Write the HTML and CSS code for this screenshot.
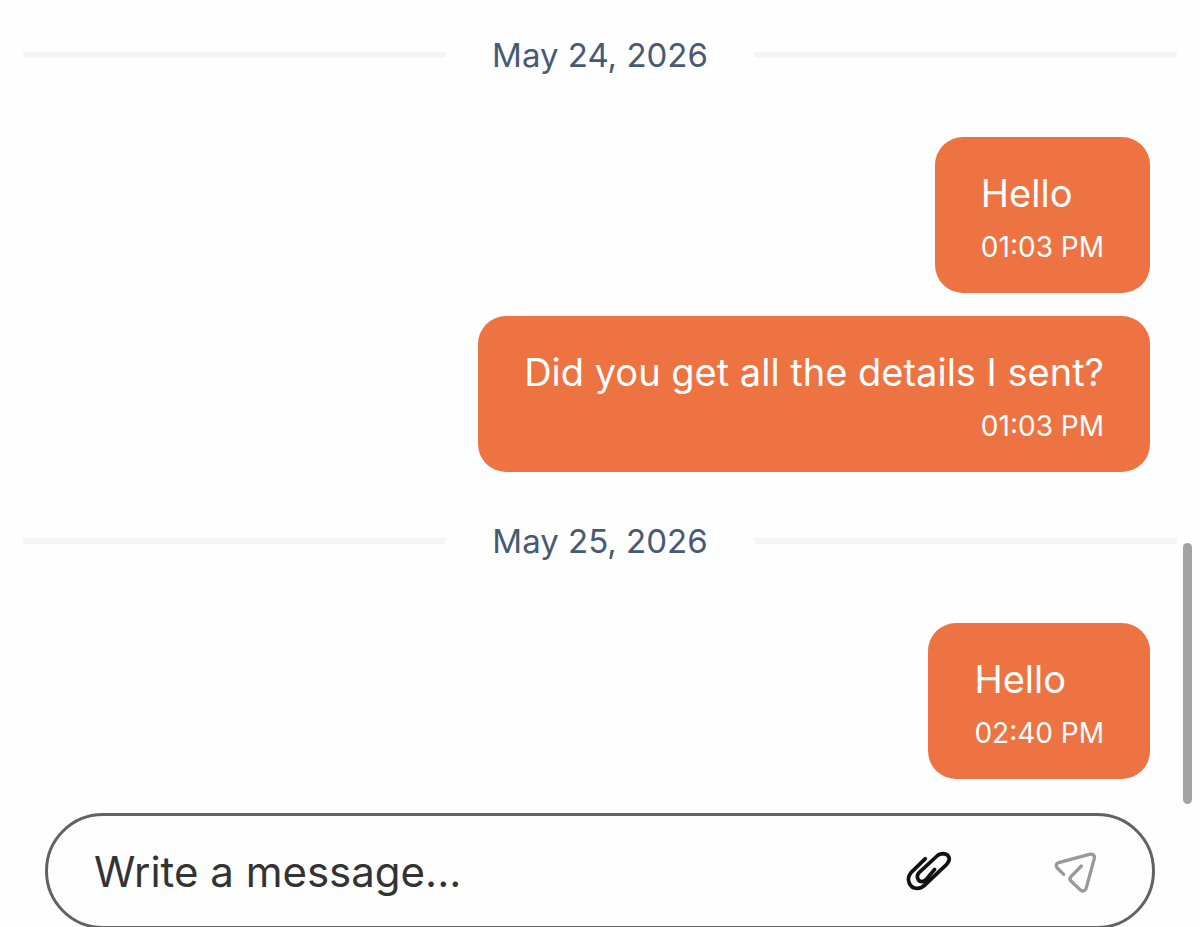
FILE: index.html
```html
<!DOCTYPE html>
<html lang="en">
<head>
  <meta charset="UTF-8">
  <meta name="viewport" content="width=device-width, initial-scale=1.0">
  <title>Messages</title>
  <link rel="stylesheet" href="styles.css">
</head>
<body>
  <main class="chat">
    <div class="messages">
      <div class="date-divider"><span>May 24, 2026</span></div>

      <div class="message-group">
        <div class="message">
          <p class="message-text">Hello</p>
          <time class="message-time">01:03 PM</time>
        </div>
        <div class="message">
          <p class="message-text">Did you get all the details I sent?</p>
          <time class="message-time">01:03 PM</time>
        </div>
      </div>

      <div class="date-divider"><span>May 25, 2026</span></div>

      <div class="message-group">
        <div class="message">
          <p class="message-text">Hello</p>
          <time class="message-time">02:40 PM</time>
        </div>
      </div>

      <div class="scroll-thumb"></div>
    </div>

    <form class="composer">
      <input class="composer-input" type="text" placeholder="Write a message..." aria-label="Write a message">
      <button class="icon-button attach-button" type="button" aria-label="Attach file">
        <svg viewBox="0 0 240 240">
          <path d="M106 83L63 125C47 143 58 172 81 172C91 172 99 168 106 161L170 100C184 86 178 69 160 68C152 68 146 70 141 75L88 124C76 135 84 152 96 152C101 152 104 150 108 146L134 115"/>
        </svg>
      </button>
      <button class="icon-button send-button" type="submit" aria-label="Send">
        <svg viewBox="0 0 240 240">
          <path d="M71 130L52 111C46 105 48 97 56 95L148 70C157 68 165 73 163 82L139 170C136 181 126 183 120 176L93 150C89 146 89 141 93 137L124 105"/>
        </svg>
      </button>
    </form>
  </main>
</body>
</html>
```

FILE: styles.css
```css
* {
  box-sizing: border-box;
}

body {
  margin: 0;
  background-color: #fefefe;
  font-family: Inter, "Liberation Sans", sans-serif;
  overflow: hidden;
}

.chat {
  display: flex;
  flex-direction: column;
}

.messages {
  position: relative;
  padding: 35px 23px 34px;
}

.date-divider {
  display: flex;
  align-items: center;
  gap: 46px;
  margin-bottom: 62px;
  color: #475a74;
  font-size: 33px;
  line-height: 40px;
}

.date-divider::before,
.date-divider::after {
  content: "";
  flex: 1;
  height: 6px;
  background-color: #f4f4f9;
}

.message-group {
  display: flex;
  flex-direction: column;
  align-items: flex-end;
  gap: 23px;
  padding-right: 27px;
}

.message-group + .date-divider {
  margin-top: 49px;
}

.message {
  display: flex;
  flex-direction: column;
  gap: 10px;
  padding: 30px 46px 28px;
  border-radius: 28px;
  background-color: #ed7342;
  color: #fff;
}

.message-text {
  margin: 0;
  font-size: 38px;
  line-height: 52px;
}

.message-time {
  align-self: flex-end;
  font-size: 28px;
  line-height: 36px;
}

.scroll-thumb {
  position: absolute;
  right: 8px;
  bottom: 9px;
  width: 9px;
  height: 261px;
  border-radius: 5px;
  background-color: #a3a3a3;
}

.composer {
  display: flex;
  align-items: center;
  gap: 70px;
  height: 116px;
  margin: 0 45px;
  padding: 0 32px 0 46px;
  border: 3px solid #626262;
  border-radius: 58px;
}

.composer-input {
  flex: 1;
  min-width: 0;
  padding: 0;
  border: none;
  outline: none;
  background: none;
  font-family: inherit;
  font-size: 42px;
  color: #333;
}

.composer-input::placeholder {
  color: #333;
  opacity: 1;
}

.icon-button {
  width: 80px;
  height: 80px;
  padding: 0;
  border: none;
  background: none;
  cursor: pointer;
}

.icon-button svg {
  display: block;
  fill: none;
  stroke-linecap: round;
  stroke-linejoin: round;
}

.attach-button svg {
  stroke: #111;
  stroke-width: 11;
}

.send-button svg {
  stroke: #999;
  stroke-width: 10;
}
```
